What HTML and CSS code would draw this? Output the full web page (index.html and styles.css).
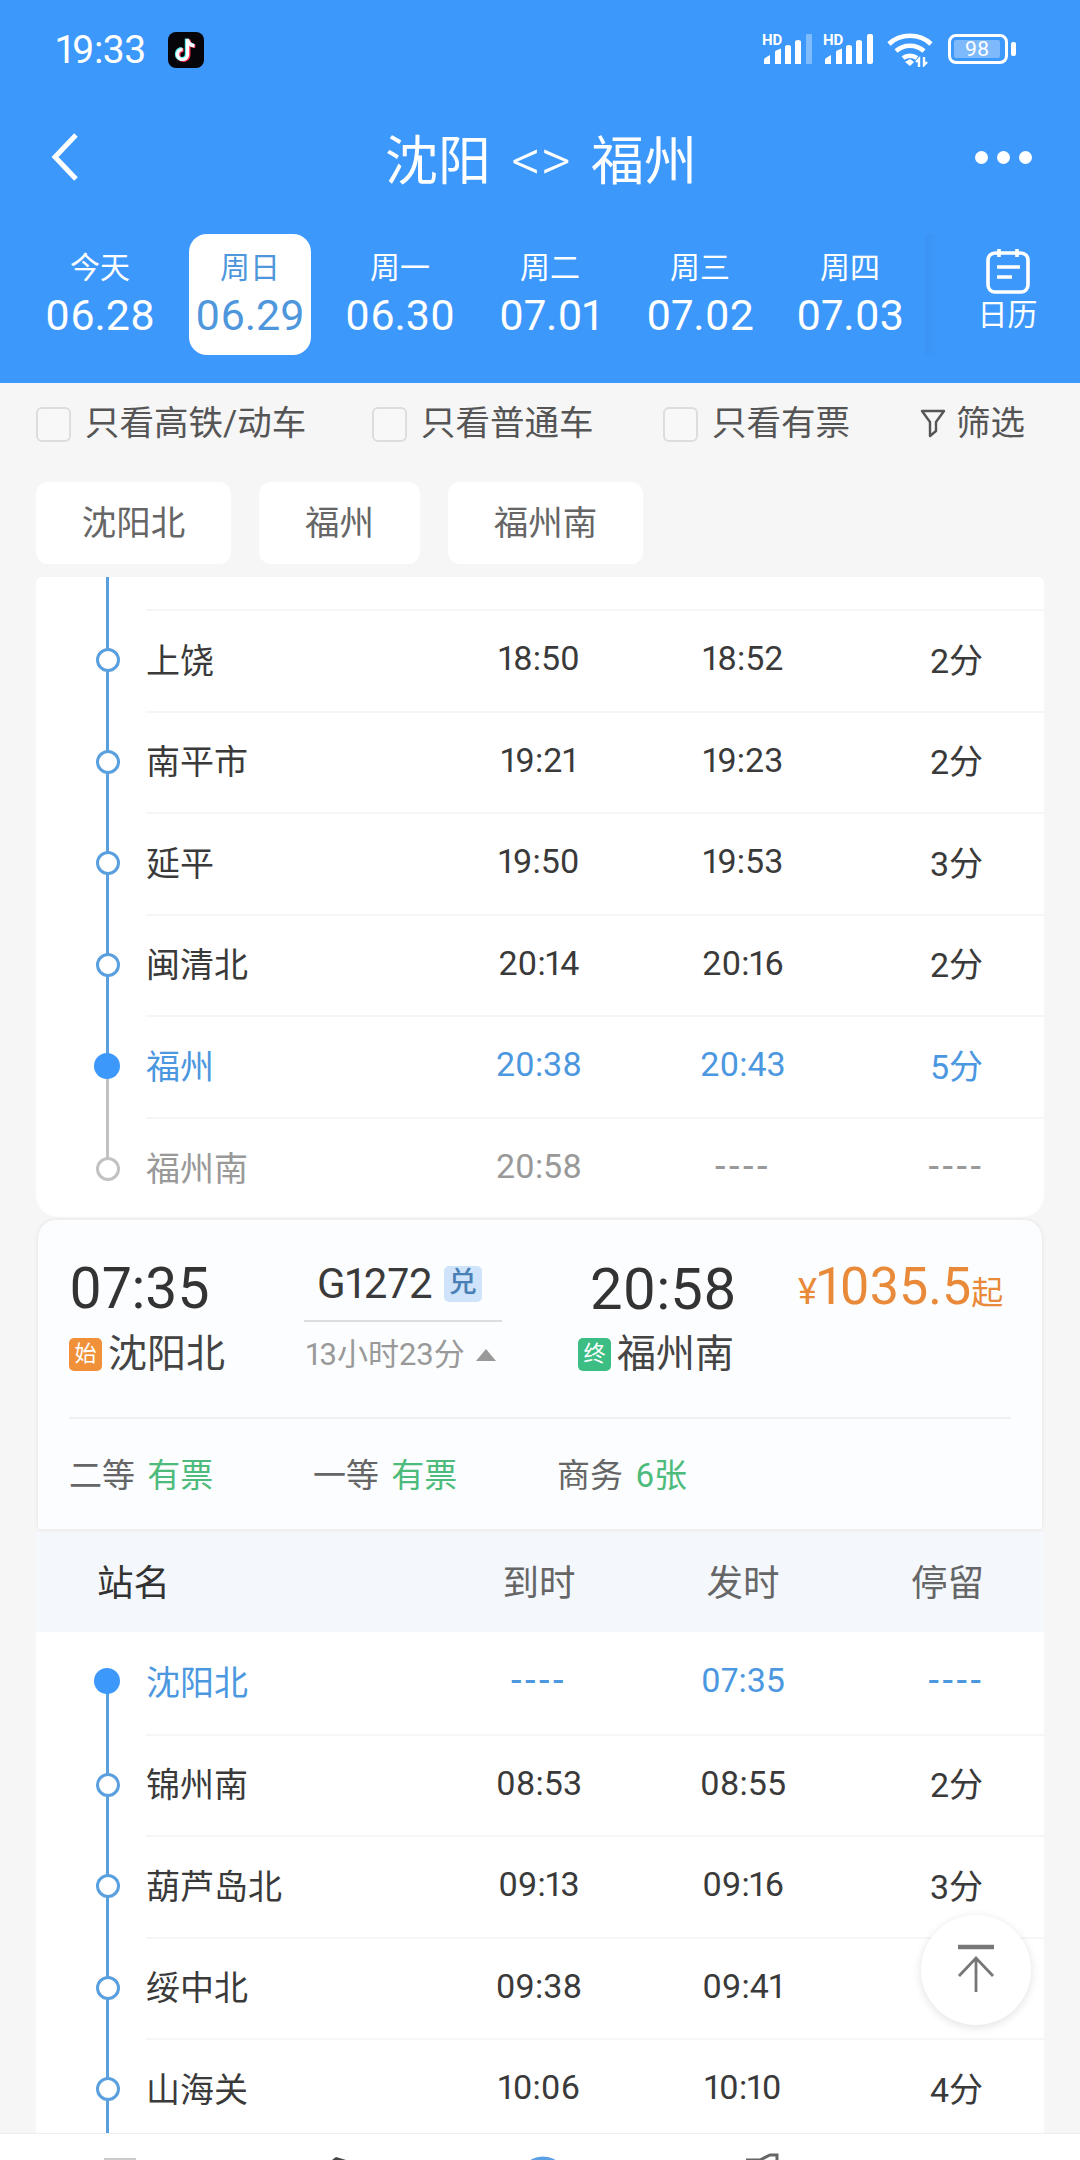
FILE: index.html
```html
<!DOCTYPE html>
<html lang="zh-CN">
<head>
    <meta charset="UTF-8">
    <meta name="viewport" content="width=device-width, initial-scale=1.0">
    <title>沈阳 &lt;&gt; 福州</title>
    <link rel="stylesheet" href="styles.css">
</head>
<body>
    <header class="top">
        <!-- status bar -->
        <div class="status">
            <span class="clock">19:33</span>
            <svg class="tiktok" viewBox="0 0 36 36" width="36" height="36">
                <rect width="36" height="36" rx="8" fill="#05050a"/>
                <path d="M20.5 7.5v15.5a5 5 0 1 1-5-5M20.5 8c.6 3.6 3.2 6 6.8 6.3" fill="none" stroke="#ff2f55" stroke-width="4"/>
                <path d="M18.8 6.5v15.5a5 5 0 1 1-5-5M18.8 7c.6 3.6 3.2 6 6.8 6.3" fill="none" stroke="#5ff0ee" stroke-width="4"/>
                <path d="M19.6 7v15.5a5 5 0 1 1-5-5M19.6 7.5c.6 3.6 3.2 6 6.8 6.3" fill="none" stroke="#fff" stroke-width="3.2"/>
            </svg>
            <div class="status-right">
                <div class="signal">
                    <span class="hd">HD</span>
                    <svg viewBox="0 0 52 36" width="52" height="36">
                        <path d="M2 33v-4q0-1 1-2l5-3v9zM13 33V21q0-1 1-1.500l5-2V33zM23 33V16q0-2 3-2t3 2v17zM33 33V11q0-2 3-2t3 2v22z" fill="#fff"/>
                        <rect x="44" y="3" width="6" height="30" rx="1" fill="#fff" opacity=".35"/>
                    </svg>
                </div>
                <div class="signal">
                    <span class="hd">HD</span>
                    <svg viewBox="0 0 52 36" width="52" height="36">
                        <path d="M2 33v-4q0-1 1-2l5-3v9zM13 33V21q0-1 1-1.500l5-2V33zM23 33V16q0-2 3-2t3 2v17zM33 33V11q0-2 3-2t3 2v22z" fill="#fff"/>
                        <rect x="44" y="3" width="6" height="30" rx="2" fill="#fff"/>
                    </svg>
                </div>
                <svg class="wifi" viewBox="0 0 48 36" width="48" height="36">
                    <path d="M3 13C14 2 34 2 45 13M10 20c8-7 20-7 28 0M17 27c4-3 10-3 14 0" fill="none" stroke="#fff" stroke-width="4.6"/>
                    <path d="M19 31l5-3 4 3-4 4z" fill="#fff"/>
                    <path d="M33 36v-8l-3 3M38 26v8l3-3" fill="none" stroke="#fff" stroke-width="2.4"/>
                </svg>
                <div class="battery"><span class="battery-level">98</span></div>
                <span class="battery-nub"></span>
            </div>
        </div>

        <!-- title -->
        <div class="titlebar">
            <svg class="back" viewBox="0 0 30 50" width="30" height="50">
                <path d="M26 3L5 25l21 22" fill="none" stroke="#fff" stroke-width="5"/>
            </svg>
            <h1>沈阳 <span class="arrows">&lt;&gt;</span> 福州</h1>
            <div class="more"><i></i><i></i><i></i></div>
        </div>

        <!-- date tabs -->
        <div class="dates">
            <div class="date"><span class="day">今天</span><span class="num">06.28</span></div>
            <div class="date active"><span class="day">周日</span><span class="num">06.29</span></div>
            <div class="date"><span class="day">周一</span><span class="num">06.30</span></div>
            <div class="date"><span class="day">周二</span><span class="num">07.01</span></div>
            <div class="date"><span class="day">周三</span><span class="num">07.02</span></div>
            <div class="date"><span class="day">周四</span><span class="num">07.03</span></div>
            <div class="calendar">
                <svg viewBox="0 0 44 46" width="44" height="46">
                    <rect x="2" y="5" width="40" height="39" rx="7" fill="none" stroke="#fff" stroke-width="3.6"/>
                    <path d="M13 1v8M31 1v8" stroke="#fff" stroke-width="3.6"/>
                    <path d="M11 19h23M11 29h15" stroke="#fff" stroke-width="3.4"/>
                </svg>
                <span>日历</span>
            </div>
        </div>
    </header>

    <main class="content">
        <div class="filters">
            <label class="check check-a"><i class="box"></i><span>只看高铁/动车</span></label>
            <label class="check check-b"><i class="box"></i><span>只看普通车</span></label>
            <label class="check check-c"><i class="box"></i><span>只看有票</span></label>
            <div class="filter-btn">
                <svg viewBox="0 0 26 30" width="26" height="30">
                    <path d="M2 3h22l-8 11v9l-6 5V14z" fill="none" stroke="#555" stroke-width="2.4" stroke-linejoin="round"/>
                </svg>
                <span>筛选</span>
            </div>
        </div>

        <div class="chips">
            <span class="chip chip-wide">沈阳北</span>
            <span class="chip">福州</span>
            <span class="chip chip-wide">福州南</span>
        </div>

        <!-- previous train, scrolled -->
        <section class="stops-card rounded">
            <div class="stub"></div>
            <div class="stop"><span class="name">上饶</span><span>18:50</span><span>18:52</span><span class="stay">2分</span></div>
            <div class="stop"><span class="name">南平市</span><span>19:21</span><span>19:23</span><span class="stay">2分</span></div>
            <div class="stop"><span class="name">延平</span><span>19:50</span><span>19:53</span><span class="stay">3分</span></div>
            <div class="stop"><span class="name">闽清北</span><span>20:14</span><span>20:16</span><span class="stay">2分</span></div>
            <div class="stop here"><span class="name">福州</span><span>20:38</span><span>20:43</span><span class="stay">5分</span></div>
            <div class="stop past"><span class="name">福州南</span><span>20:58</span><span class="dash">----</span><span class="stay dash">----</span></div>
        </section>

        <section class="train">
            <div class="train-main">
                <div class="end end-from">
                    <div class="end-time">07:35</div>
                    <div class="end-station"><i class="tag tag-start">始</i>沈阳北</div>
                </div>
                <div class="trip">
                    <div class="trip-no">G1272<i class="tag-dui">兑</i></div>
                    <div class="trip-line"></div>
                    <div class="trip-time">13小时23分<i class="caret"></i></div>
                </div>
                <div class="end end-to">
                    <div class="end-time">20:58</div>
                    <div class="end-station"><i class="tag tag-end">终</i>福州南</div>
                </div>
                <div class="price"><small>¥</small>1035.5<small class="qi">起</small></div>
            </div>
            <div class="seats">
                <span class="seat seat-2">二等 <b>有票</b></span>
                <span class="seat seat-1">一等 <b>有票</b></span>
                <span class="seat seat-b">商务 <b>6张</b></span>
            </div>
        </section>

        <div class="table-head">
            <span class="head-name">站名</span><span>到时</span><span>发时</span><span class="head-stay">停留</span>
        </div>

        <section class="stops-card">
            <div class="stop first"><span class="name blue">沈阳北</span><span class="blue dash">----</span><span class="blue">07:35</span><span class="stay blue dash">----</span></div>
            <div class="stop"><span class="name">锦州南</span><span>08:53</span><span>08:55</span><span class="stay">2分</span></div>
            <div class="stop"><span class="name">葫芦岛北</span><span>09:13</span><span>09:16</span><span class="stay">3分</span></div>
            <div class="stop"><span class="name">绥中北</span><span>09:38</span><span>09:41</span><span class="stay">3分</span></div>
            <div class="stop"><span class="name">山海关</span><span>10:06</span><span>10:10</span><span class="stay">4分</span></div>
        </section>
    </main>

    <button class="to-top">
        <svg viewBox="0 0 40 50" width="40" height="50">
            <path d="M2 3h36" stroke="#777" stroke-width="4.5"/>
            <path d="M20 48V16M3 32l17-18 17 18" fill="none" stroke="#777" stroke-width="2.8"/>
        </svg>
    </button>

    <!-- bottom nav, only the tops of the icons are on screen -->
    <nav class="tabbar">
        <svg viewBox="0 0 1080 26" width="1080" height="26">
            <path d="M104 25h32" stroke="#ccc" stroke-width="2"/>
            <path d="M332 26l4-3 10 3" fill="#444"/>
            <path d="M532 27q11-5 22 0" fill="none" stroke="#5b9fe6" stroke-width="4"/>
            <path d="M746 26h14l10-5h7v5" fill="none" stroke="#666" stroke-width="3"/>
        </svg>
    </nav>
</body>
</html>
```

FILE: styles.css
```css
*,
*::before,
*::after {
    box-sizing: border-box;
}
body {
    margin: 0;
    width: 1080px;
    height: 2160px;
    overflow: hidden;
    position: relative;
    background: #f6f6f6;
    color: #3a3a3a;
    font-family: Roboto, "Noto Sans CJK SC", sans-serif;
    font-variant-numeric: proportional-nums;
}
i {
    font-style: normal;
}

/* header */
.top {
    height: 383px;
    background: #3d98fb;
    color: #fff;
}
.status {
    height: 100px;
    padding: 30px 64px 0 56px;
    display: flex;
    align-items: flex-start;
}
.clock {
    font-size: 39px;
    line-height: 40px;
    width: 112px;
    letter-spacing: -0.6px;
}
.tiktok {
    margin-top: 2px;
}
.status-right {
    margin-left: auto;
    display: flex;
    align-items: center;
    height: 38px;
}
.signal {
    display: flex;
    flex-direction: column;
    margin-right: 11px;
    position: relative;
    width: 52px;
    height: 36px;
}
.signal + .signal {
    margin-left: -2px;
}
.signal svg {
    display: block;
}
/* sits over the two lowest bars */
.signal .hd {
    position: absolute;
    left: 0;
    top: 2px;
    font-size: 15px;
    line-height: 15px;
    font-weight: 700;
}
.wifi {
    margin-right: 14px;
}
.battery {
    width: 60px;
    height: 30px;
    border: 3px solid #fff;
    border-radius: 8px;
    padding: 3px;
}
.battery-level {
    display: block;
    height: 18px;
    width: 46px;
    background: #7db9fb;
    border-radius: 2px;
    font-size: 21px;
    line-height: 18px;
    text-align: center;
}
.battery-nub {
    width: 5px;
    height: 14px;
    margin-left: 3px;
    background: #fff;
    border-radius: 2px;
}

.titlebar {
    height: 120px;
    padding: 0 48px 6px 50px;
    display: grid;
    grid-template-columns: 1fr auto 1fr;
    align-items: center;
    margin-bottom: 14px;
}
.titlebar h1 {
    margin: 0;
    font-size: 53px;
    font-weight: 400;
}
.arrows {
    margin: 0 7px;
    font-size: 58px;
    font-weight: 300;
}
.more {
    justify-self: end;
    display: flex;
    gap: 9px;
}
.more i {
    width: 13px;
    height: 13px;
    background: #fff;
    border-radius: 50%;
}

.dates {
    display: flex;
    padding-left: 25px;
}
.date {
    width: 150px;
    height: 121px;
    padding-bottom: 2px;
    border-radius: 18px;
    display: flex;
    flex-direction: column;
    align-items: center;
    justify-content: center;
}
.date .day {
    font-size: 30px;
    line-height: 42px;
}
.date .num {
    font-size: 43px;
    line-height: 52px;
}
.date.active {
    width: 122px;
    margin: 0 14px;
    background: #fff;
    color: #4f97dc;
}
.calendar {
    width: 155px;
    height: 121px;
    padding: 0 0 6px 10px;
    font-size: 30px;
    line-height: 40px;
    background: linear-gradient(90deg, rgba(40, 110, 200, 0.12), rgba(61, 152, 251, 0) 14px);
    display: flex;
    flex-direction: column;
    align-items: center;
    justify-content: center;
}
.calendar svg {
    margin-bottom: 1px;
}

/* filters */
.content {
    padding: 0 36px;
}
.filters {
    height: 82px;
    display: flex;
    align-items: center;
    font-size: 34.5px;
    color: #555;
}
.check {
    display: flex;
    align-items: center;
}
.check span,
.filter-btn span {
    margin-bottom: 9px;
}
.check-a {
    width: 336px;
}
.check-b {
    width: 291px;
}
.check-c {
    width: 257px;
}
.box {
    width: 35px;
    height: 35px;
    margin-right: 14px;
    background: #f8f8f8;
    border: 2px solid #ddd;
    border-radius: 6px;
}
.filter-btn {
    display: flex;
    align-items: center;
    gap: 10px;
}
.filter-btn svg {
    margin-bottom: 3px;
}

.chips {
    display: flex;
    gap: 28px;
    margin-top: 17px;
}
.chip {
    width: 161px;
    height: 82px;
    padding-bottom: 7px;
    background: #fff;
    border-radius: 12px;
    color: #666;
    font-size: 34.5px;
    display: flex;
    align-items: center;
    justify-content: center;
}
.chip-wide {
    width: 195px;
}

/* stop lists */
.stops-card {
    background: #fff;
    overflow: hidden;
}
.chips + .stops-card {
    margin-top: 13px;
}
.stops-card.rounded {
    border-radius: 6px 6px 22px 22px;
}
.stub {
    height: 32px;
    position: relative;
}
.stub::before {
    content: "";
    position: absolute;
    left: 70px;
    top: 0;
    bottom: 0;
    width: 3px;
    background: #5aa0de;
}
.stop {
    position: relative;
    height: 101.5px;
    padding-bottom: 5px;
    margin-left: 110px;
    border-top: 2px solid #f6f6f6;
    display: grid;
    grid-template-columns: 291px 204px 204px 1fr;
    align-items: center;
    text-align: center;
    font-size: 34px;
}
.stops-card .stop.first {
    border-top: 0;
}
.stop .name {
    text-align: left;
}
.stop .stay {
    padding-left: 24px;
}
/* rail and marker lie over the row */
.stop::before {
    content: "";
    position: absolute;
    left: -40px;
    top: -2px;
    bottom: 0;
    width: 3px;
    background: #5aa0de;
}
.stop::after {
    content: "";
    position: absolute;
    left: -50px;
    top: 37px;
    width: 24px;
    height: 24px;
    background: #fff;
    border: 3px solid #5aa0de;
    border-radius: 50%;
}
.stop.here {
    color: #4c98e0;
}
.stop.here::before {
    background: linear-gradient(#5aa0de 50%, #c2c2c2 50%);
}
.stop.here::after,
.stop.first::after {
    left: -52px;
    top: 36px;
    width: 26px;
    height: 26px;
    background: #3d98fb;
    border: 0;
}
.stop.past {
    color: #999;
    height: 100.5px;
    padding-bottom: 3px;
}
.stop.past::before {
    background: #c2c2c2;
    bottom: 50px;
}
.stop.past::after {
    top: 38px;
    border-color: #c2c2c2;
}
.stop.first::before {
    top: 50px;
}
.stop .blue {
    color: #4c98e0;
}
.stop .dash {
    font-size: 38px;
    letter-spacing: 3.5px;
}

/* train card */
.train {
    margin: 3px 2px 0;
    height: 309px;
    background: #fcfdfe;
    border-radius: 18px 18px 0 0;
    box-shadow: 0 0 4px rgba(0, 0, 0, 0.09);
    position: relative;
}
.train-main {
    height: 199px;
    margin: 0 31px;
    border-bottom: 2px solid #f0f0f0;
    display: flex;
    padding-top: 41px;
}
.end {
    flex: none;
}
.end-time {
    font-size: 57px;
    line-height: 56px;
    color: #333;
}
.end-station {
    margin-top: 13px;
    font-size: 39px;
    line-height: 48px;
    color: #444;
    display: flex;
    align-items: center;
}
.tag {
    width: 33px;
    height: 33px;
    margin-right: 6px;
    border-radius: 5px;
    font-size: 22px;
    line-height: 31px;
    text-align: center;
    color: #fff;
}
.tag-start {
    background: #f0913a;
}
.tag-end {
    background: #3cbd83;
}
.end-from {
    width: 235px;
}
.end-to {
    width: 220px;
}
.end-to .end-time {
    padding-left: 12px;
    font-size: 58px;
}
.trip {
    flex: none;
    width: 274px;
}
.trip-no {
    font-size: 42px;
    line-height: 42px;
    display: flex;
    align-items: center;
    padding-left: 13px;
    height: 46px;
}
.tag-dui {
    width: 38px;
    height: 36px;
    margin-left: 11px;
    background: #cfe4fb;
    border-radius: 5px;
    color: #4a7fb5;
    font-size: 28px;
    font-weight: 500;
    line-height: 34px;
    text-align: center;
}
.trip-line {
    width: 198px;
    height: 2px;
    margin-top: 13px;
    background: #ddd;
}
.trip-time {
    margin-top: 12px;
    padding-left: 2px;
    font-size: 31px;
    line-height: 42px;
    color: #999;
    display: flex;
    align-items: center;
}
.caret {
    margin-left: 11px;
    border-left: 10px solid transparent;
    border-right: 10px solid transparent;
    border-bottom: 12px solid #999;
}
.price {
    font-size: 52px;
    line-height: 52px;
    color: #e9893a;
    white-space: nowrap;
}
.price small {
    font-size: 36px;
}
.price .qi {
    font-size: 32px;
}
.seats {
    height: 108px;
    padding-left: 31px;
    display: flex;
    align-items: center;
    font-size: 33px;
    color: #666;
}
.seat b {
    font-weight: 400;
    color: #4dbb7b;
    margin-left: 4px;
}
.seat-2,
.seat-1 {
    width: 244px;
}

.table-head {
    height: 100px;
    padding-bottom: 3px;
    margin-top: 3px;
    background: #f4f8fd;
    display: grid;
    grid-template-columns: 401px 204px 204px 1fr;
    align-items: center;
    text-align: center;
    font-size: 36.5px;
    color: #666;
}
.head-name {
    text-align: left;
    padding-left: 61px;
    color: #333;
}
.head-stay {
    padding-left: 6px;
}

/* floating button over the list */
.to-top {
    position: absolute;
    left: 921px;
    top: 1915px;
    width: 110px;
    height: 110px;
    border: 0;
    padding: 0;
    border-radius: 50%;
    background: #fff;
    box-shadow: 0 2px 10px rgba(0, 0, 0, 0.12);
}

.tabbar {
    position: absolute;
    left: 0;
    right: 0;
    bottom: 0;
    height: 27px;
    background: #fff;
    border-top: 1px solid #eee;
}
.tabbar svg {
    display: block;
}
```
